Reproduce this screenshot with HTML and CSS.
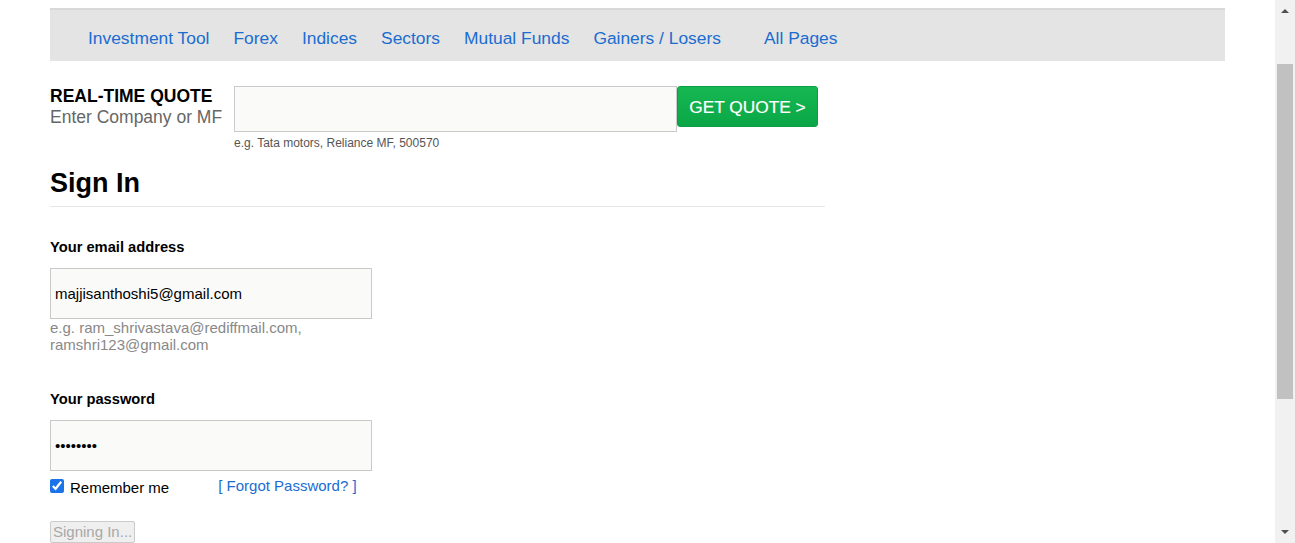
FILE: index.html
```html
<!DOCTYPE html>
<html lang="en">
<head>
<meta charset="utf-8">
<title>Sign In</title>
<link rel="stylesheet" href="styles.css">
</head>
<body>
<div class="page">
  <div class="container">
    <nav class="topnav">
      <a href="#" class="nav-link">Investment Tool</a>
      <a href="#" class="nav-link">Forex</a>
      <a href="#" class="nav-link">Indices</a>
      <a href="#" class="nav-link">Sectors</a>
      <a href="#" class="nav-link">Mutual Funds</a>
      <a href="#" class="nav-link">Gainers / Losers</a>
      <a href="#" class="nav-link nav-link-all">All Pages</a>
    </nav>

    <div class="quote-row">
      <div class="quote-label">
        <div class="quote-title">REAL-TIME QUOTE</div>
        <div class="quote-sub">Enter Company or MF</div>
      </div>
      <div class="quote-field">
        <div class="quote-inputs">
          <input type="text" class="quote-input">
          <button class="quote-btn">GET QUOTE &gt;</button>
        </div>
        <div class="quote-hint">e.g. Tata motors, Reliance MF, 500570</div>
      </div>
    </div>

    <section class="signin">
      <h1 class="signin-title">Sign In</h1>

      <label class="field-label field-label-email">Your email address</label>
      <input type="text" class="text-input" value="majjisanthoshi5@gmail.com">
      <div class="field-hint">e.g. ram_shrivastava@rediffmail.com,<br>ramshri123@gmail.com</div>

      <label class="field-label field-label-pass">Your password</label>
      <input type="password" class="text-input" value="abcdefgh">

      <div class="remember-row">
        <label class="remember"><input type="checkbox" class="remember-box" checked>Remember me</label>
        <a href="#" class="forgot">[ Forgot Password? ]</a>
      </div>

      <button class="submit-btn" disabled>Signing In...</button>
    </section>
  </div>
</div>
<div class="fake-scrollbar">
  <div class="sb-arrow sb-up"></div>
  <div class="sb-thumb"></div>
  <div class="sb-arrow sb-down"></div>
</div>
</body>
</html>
```

FILE: styles.css
```css
html {
  overflow: hidden;
}
body {
  margin: 0;
  font-family: "Liberation Sans", Arial, sans-serif;
  color: #000;
  background: #fff;
}
.page {
  margin-right: 20px;
  padding-top: 8px;
}
.container {
  width: 1175px;
  margin: 0 auto;
}

/* nav */
.topnav {
  display: flex;
  border-top: 2px solid #d8d8d8;
  background: #e4e4e4;
  padding: 18px 0 13px 38px;
  height: 20px;
}
.nav-link {
  font-size: 17.4px;
  line-height: 20px;
  color: #1b6cd0;
  text-decoration: none;
  margin-right: 24px;
  white-space: nowrap;
}
.nav-link-all {
  margin-left: 19px;
}

/* quote */
.quote-row {
  display: flex;
  margin-top: 25px;
}
.quote-label {
  width: 184px;
  padding-top: 1px;
  font-size: 17.5px;
  line-height: 18px;
}
.quote-title {
  font-weight: bold;
  color: #000;
}
.quote-sub {
  margin-top: 3px;
  color: #666;
}
.quote-inputs {
  display: flex;
  align-items: flex-start;
}
.quote-input {
  box-sizing: border-box;
  width: 443px;
  height: 46px;
  margin: 0;
  border: 1px solid #cbcbcb;
  background: #fafaf8;
  font-family: inherit;
  font-size: 15px;
  padding: 0 6px;
  outline: none;
}
.quote-btn {
  box-sizing: border-box;
  width: 141px;
  height: 41px;
  margin: 0;
  border: 1px solid #0c9e44;
  border-radius: 3px;
  background: linear-gradient(#16b852, #0aa646);
  color: #fff;
  font-family: inherit;
  font-size: 17.3px;
  padding: 1px 0 0;
  text-align: center;
  -webkit-text-stroke: 0.2px #fff;
}
.quote-hint {
  margin-top: 4px;
  font-size: 12px;
  line-height: 14px;
  color: #555;
}

/* sign in */
.signin {
  width: 775px;
}
.signin-title {
  margin: 17px 0 0;
  font-size: 27px;
  line-height: 32px;
  font-weight: bold;
  padding-bottom: 7px;
  border-bottom: 1px solid #e6e6e6;
}
.field-label {
  display: block;
  font-size: 14.7px;
  line-height: 17px;
  font-weight: bold;
}
.field-label-email {
  margin-top: 32px;
}
.field-label-pass {
  margin-top: 38px;
}
.text-input {
  display: block;
  box-sizing: border-box;
  width: 322px;
  height: 51px;
  margin: 12px 0 0;
  border: 1px solid #c9c9c9;
  background: #fafaf8;
  font-family: inherit;
  font-size: 15px;
  color: #000;
  padding: 0 4px;
  outline: none;
}
.field-hint {
  font-size: 15px;
  line-height: 17px;
  color: #888;
}
.remember-row {
  display: flex;
  align-items: flex-start;
}
.remember {
  display: flex;
  align-items: flex-start;
  margin-top: 8px;
  font-size: 15px;
  line-height: 17px;
}
.remember-box {
  width: 14px;
  height: 14px;
  margin: 0 6px 0 0;
  accent-color: #1a73e8;
}
.forgot {
  margin-top: 6px;
  margin-left: 49px;
  font-size: 15px;
  line-height: 17px;
  color: #1b6cd0;
  text-decoration: none;
}
.submit-btn {
  display: block;
  margin-top: 25px;
  height: 22px;
  padding: 1px 2px;
  border: 1px solid #cbcbcb;
  border-radius: 2px;
  background: #efefef;
  color: #a8a8a8;
  font-family: inherit;
  font-size: 15px;
  line-height: 18px;
}

/* scrollbar */
.fake-scrollbar {
  position: fixed;
  top: 0;
  right: 0;
  width: 20px;
  height: 543px;
  background: #f1f1f1;
  display: flex;
  flex-direction: column;
  align-items: center;
}
.sb-arrow {
  width: 0;
  height: 0;
  border-left: 4px solid transparent;
  border-right: 4px solid transparent;
}
.sb-up {
  margin-top: 9px;
  border-bottom: 4px solid #505050;
}
.sb-thumb {
  margin-top: 51px;
  width: 16px;
  height: 335px;
  background: #c1c1c1;
}
.sb-down {
  margin-top: auto;
  margin-bottom: 9px;
  border-top: 4px solid #505050;
}
```
